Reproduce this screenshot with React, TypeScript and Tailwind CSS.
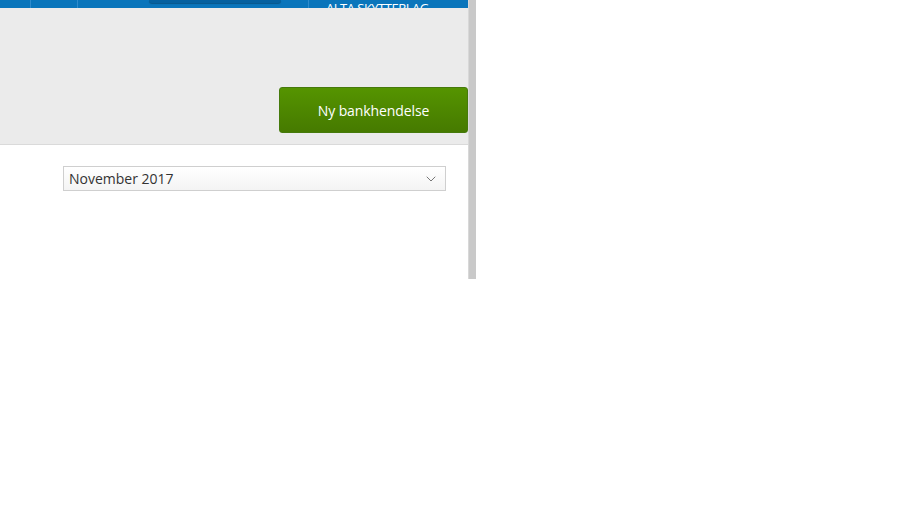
import { ChevronDown } from "lucide-react";

const font = { fontFamily: '"Open Sans", "Noto Sans", sans-serif' };

export default function App() {
  return (
    <div className="flex h-[518px] w-[921px] bg-white" style={font}>
      <div className="flex h-[279px] w-[476px]">
        <div className="flex w-[468px] flex-col">
          {/* top nav, scrolled mostly out of view */}
          <div className="relative flex h-[8px] overflow-hidden bg-[#0a75bb]">
            <div className="w-[31px] border-r border-[#2f8bcc]" />
            <div className="w-[47px] border-r border-[#2f8bcc]" />
            <div className="flex w-[231px] border-r border-[#2f8bcc] pl-[71px]">
              <div className="h-[3px] w-[132px] rounded-b-[5px] bg-[#0561a0] shadow-[0_1px_1px_rgba(0,0,0,0.25)]" />
            </div>
            <div className="flex flex-1 items-end pl-[17px]">
              <span className="-mb-[7px] text-[13px] leading-none tracking-[-0.5px] text-white">ALTA SKYTTERLAG</span>
            </div>
          </div>

          <div className="flex h-[137px] items-end justify-end border-b border-[#dadada] bg-[#ebebeb] pb-[11px]">
            <button className="h-[46px] w-[189px] rounded-[3px] border border-[#467a0c] bg-gradient-to-b from-[#559400] to-[#467a00] text-[14px] tracking-[-0.1px] text-white">
              Ny bankhendelse
            </button>
          </div>

          <div className="flex flex-1 flex-col bg-white pl-[63px] pr-[22px] pt-[21px]">
            <div className="flex h-[25px] items-center justify-between border border-[#cfcfcf] bg-gradient-to-b from-white to-[#f4f4f4] pl-[5px] pr-[6px]">
              <span className="text-[14px] text-[#333]">November 2017</span>
              <ChevronDown className="h-[16px] w-[16px] text-[#777]" strokeWidth={1.5} />
            </div>
          </div>
        </div>
        <div className="w-[8px] border-l border-[#d8d8d8] bg-[#c9c9c9]" />
      </div>
    </div>
  );
}
